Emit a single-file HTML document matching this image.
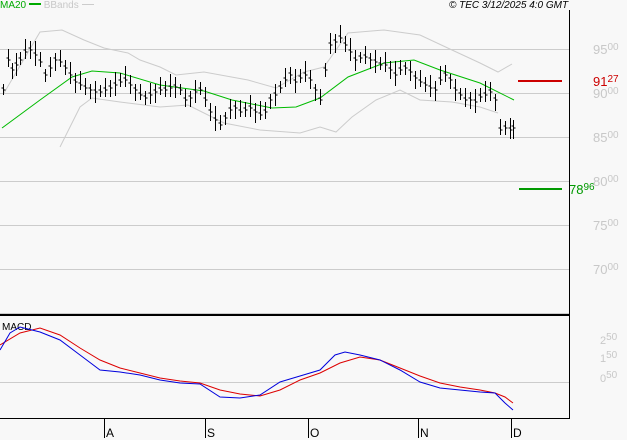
<!DOCTYPE html><html><head><style>
body{margin:0;background:#f8f8f8;width:627px;height:440px;overflow:hidden;font-family:"Liberation Sans",sans-serif}
.l{position:absolute;font-size:13px;color:#c8c8c8}
.l small{font-size:10px;vertical-align:4px}
</style></head><body>
<div style="position:absolute;left:0;top:0;font-size:10px;color:#0a0"><span>MA20</span> <span style="display:inline-block;width:12px;height:2px;background:#0a0;vertical-align:3px"></span> <span style="color:#c8c8c8">BBands</span> <span style="display:inline-block;width:12px;height:1px;background:#ccc;vertical-align:3px"></span></div>
<div style="position:absolute;left:449px;top:0;font-size:10px;font-style:italic;color:#000">© TEC 3/12/2025 4:0 GMT</div>
<div class="l" style="left:593px;top:42px">95<small>00</small></div>
<div class="l" style="left:593px;top:86px">90<small>00</small></div>
<div class="l" style="left:593px;top:130px">85<small>00</small></div>
<div class="l" style="left:593px;top:174px">80<small>00</small></div>
<div class="l" style="left:593px;top:218px">75<small>00</small></div>
<div class="l" style="left:593px;top:262px">70<small>00</small></div>
<div class="l" style="left:593px;top:74px;color:#c00">91<small>27</small></div>
<div class="l" style="left:569px;top:182px;color:#090">78<small>96</small></div>
<div class="l" style="left:600px;top:332px;font-size:11px">2<small>50</small></div>
<div class="l" style="left:600px;top:350px;font-size:11px">1<small>50</small></div>
<div class="l" style="left:600px;top:370px;font-size:11px">0<small>50</small></div>
<div style="position:absolute;left:2px;top:322px;font-size:10px">MACD</div>
<svg width="627" height="440" style="position:absolute;left:0;top:0" id="s">
<g stroke="#ccc" stroke-width="1">
<line x1="0" y1="49.5" x2="569" y2="49.5"/><line x1="0" y1="93.5" x2="569" y2="93.5"/><line x1="0" y1="137.5" x2="569" y2="137.5"/><line x1="0" y1="181.5" x2="569" y2="181.5"/><line x1="0" y1="225.5" x2="569" y2="225.5"/><line x1="0" y1="269.5" x2="569" y2="269.5"/><line x1="0" y1="313.5" x2="569" y2="313.5"/><line x1="0" y1="382.5" x2="569" y2="382.5"/>
</g>
<line x1="0" y1="315" x2="569" y2="315" stroke="#000" stroke-width="2"/>
<line x1="569.5" y1="10" x2="569.5" y2="419" stroke="#000"/>
<line x1="0" y1="418.5" x2="570" y2="418.5" stroke="#000"/>
<g stroke="#000"><line x1="104.5" y1="419" x2="104.5" y2="438"/><line x1="205.5" y1="419" x2="205.5" y2="438"/><line x1="308.5" y1="419" x2="308.5" y2="438"/><line x1="418.5" y1="419" x2="418.5" y2="438"/><line x1="511.5" y1="419" x2="511.5" y2="438"/></g>
<g font-size="12" font-family="Liberation Sans"><text x="106" y="437">A</text><text x="207" y="437">S</text><text x="310" y="437">O</text><text x="420" y="437">N</text><text x="513" y="437">D</text></g>
<line x1="518" y1="81" x2="562" y2="81" stroke="#c00" stroke-width="2"/>
<line x1="519" y1="189" x2="562" y2="189" stroke="#090" stroke-width="2"/>
<g fill="none" stroke="#ccc">
<polyline points="4,93 40,32 62,30 84,40 104,48 128,53 140,60 160,67 176,75 204,72 248,80 276,88 304,72 324,67 348,33 384,30 420,35 452,50 480,63 498,72 512,64"/>
<polyline points="60,147 80,107 92,98 120,102 160,107 188,105 224,123 260,130 300,133 320,127 336,132 352,117 376,100 400,90 420,100 452,102 480,107 498,113"/>
</g>
<polyline fill="none" stroke="#0b0" points="2,128 40,100 72,77 92,71 120,73 160,85 204,91 232,100 272,108 296,107 320,98 348,77 384,63 414,60 440,70 480,83 514,100"/>
<g id="bars" stroke="#000"></g>
<polyline fill="none" stroke="#d00" points="0,345 20,333 40,328 60,335 80,348 100,360 120,368 140,373 160,378 180,381 200,383 220,390 240,394 260,396 280,390 300,380 320,373 340,363 360,357 380,360 400,368 420,376 440,383 460,387 480,390 495,393 505,397 513,403"/>
<polyline fill="none" stroke="#00d" points="0,350 10,333 20,327 40,332 60,340 80,355 100,370 120,372 140,375 160,380 180,383 200,384 220,397 240,398 260,395 280,382 300,376 320,370 335,355 345,352 360,355 380,360 400,370 420,382 440,388 460,390 480,392 495,393 505,403 513,410"/>
</svg>
<script>
var c=[3,90,8,60,12,70,16,65,20,60,25,52,30,50,35,55,40,62,45,75,50,68,55,60,60,62,65,68,70,75,75,82,80,85,85,88,90,90,95,92,100,92,105,90,110,88,115,85,120,82,125,80,130,85,135,90,140,95,145,98,150,95,155,92,160,90,165,90,170,88,175,87,180,90,185,100,190,98,195,92,200,90,205,100,210,112,215,120,220,125,225,118,230,110,235,108,240,112,245,110,250,108,255,112,260,115,265,112,270,100,275,95,280,88,285,80,290,75,295,82,300,78,305,75,310,80,315,90,320,100,325,70,330,45,335,42,340,38,345,45,350,52,355,60,360,58,365,57,370,60,375,62,380,65,385,65,390,70,395,75,400,70,405,68,410,72,415,78,420,82,425,85,430,88,435,90,440,80,445,75,450,80,455,90,460,95,465,100,470,100,475,102,480,97,485,95,490,92,495,100,500,130,505,128,510,130,513,128];
var g=document.getElementById('bars'),h='';
for(var i=0;i<c.length;i+=2){var x=c[i]+.5,y=c[i+1],a=6+(i*7%9),b=5+(i*5%8);
h+='<line x1="'+x+'" y1="'+(y-a)+'" x2="'+x+'" y2="'+(y+b)+'"/><line x1="'+(x-2)+'" y1="'+(y-2)+'" x2="'+x+'" y2="'+(y-2)+'"/><line x1="'+x+'" y1="'+y+'" x2="'+(x+2)+'" y2="'+y+'"/>';}
g.innerHTML=h;
</script>
</body></html>
